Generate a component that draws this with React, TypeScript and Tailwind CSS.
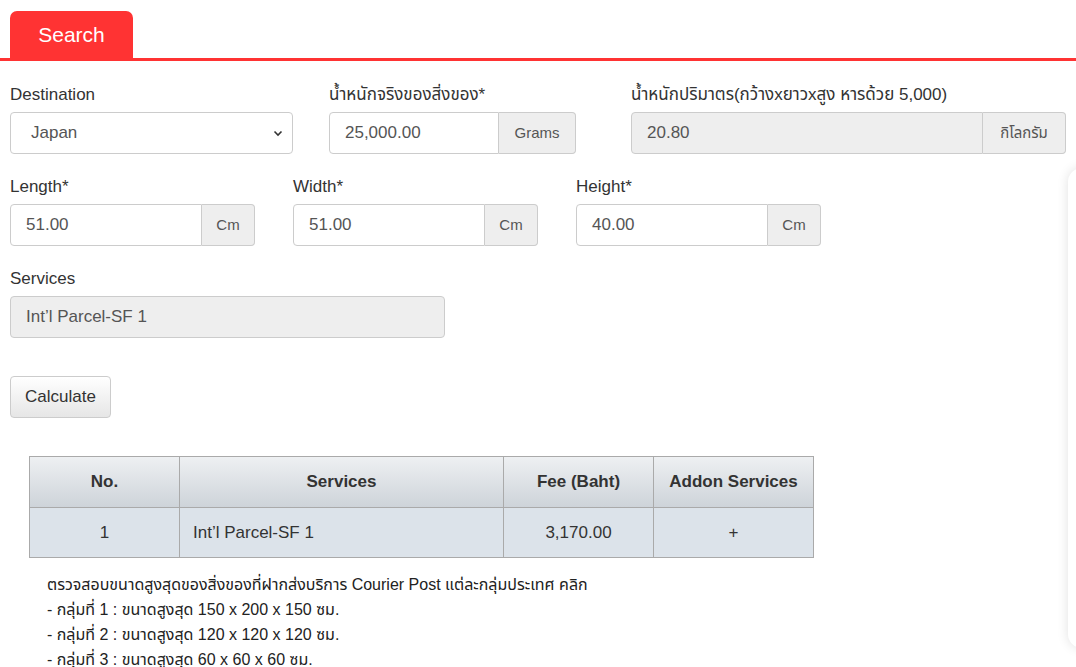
export default function App() {
  const f = { fontFamily: '"Liberation Sans", "Noto Sans", "Noto Sans Thai", sans-serif' };
  const inp = "h-[42px] border border-[#cccccc] flex items-center px-[15px] text-[17px] text-[#555]";
  const addon = "h-[42px] border border-l-0 border-[#cccccc] bg-[#eeeeee] flex items-center justify-center text-[15px] text-[#555] rounded-r-[4px]";
  const Group = ({ w, aw, v, u }: { w: number; aw: number; v: string; u: string }) => (
    <div className="flex" style={{ width: w }}>
      <div className={inp + " flex-1 rounded-l-[4px] bg-white"}>{v}</div>
      <div className={addon} style={{ width: aw }}>{u}</div>
    </div>
  );
  return (
    <div className="relative w-[1076px] h-[667px] overflow-hidden bg-white text-[#333]" style={f}>
      <div className="absolute left-[1068px] top-[168px] w-[40px] h-[480px] rounded-[14px] bg-white shadow-[0_0_12px_rgba(0,0,0,0.12)]" />
      <div className="pt-[11px] pl-[10px] border-b-[3px] border-[#ff3333]">
        <div className="w-[123px] h-[47px] bg-[#ff3333] rounded-t-[7px] text-white text-[21px] flex items-center justify-center">Search</div>
      </div>
      <div className="px-[10px] pt-[21px] text-[17px]">
        <div className="flex">
          <div className="w-[320px]">
            <div className="h-[30px]">Destination</div>
            <div className={inp + " w-[283px] rounded-[4px] bg-white justify-between px-[20px] pr-[8px]"}>
              <span>Japan</span>
              <svg width="12" height="12" viewBox="0 0 12 12"><path d="M2.5 4.5 6 8l3.5-3.5" fill="none" stroke="#333" strokeWidth="1.6" /></svg>
            </div>
          </div>
          <div className="w-[303px]">
            <div className="h-[30px]">น้ำหนักจริงของสิ่งของ*</div>
            <Group w={247} aw={77} v="25,000.00" u="Grams" />
          </div>
          <div>
            <div className="h-[30px]">น้ำหนักปริมาตร(กว้างxยาวxสูง หารด้วย 5,000)</div>
            <div className="flex w-[435px]">
              <div className={inp + " flex-1 rounded-l-[4px] bg-[#eeeeee]"}>20.80</div>
              <div className={addon + " w-[83px]"}>กิโลกรัม</div>
            </div>
          </div>
        </div>
        <div className="flex mt-[20px] gap-[38px]">
          {[["Length*", "51.00"], ["Width*", "51.00"], ["Height*", "40.00"]].map(([l, v]) => (
            <div key={l}>
              <div className="h-[30px]">{l}</div>
              <Group w={245} aw={53} v={v} u="Cm" />
            </div>
          ))}
        </div>
        <div className="mt-[20px]">
          <div className="h-[30px]">Services</div>
          <div className={inp + " w-[435px] rounded-[4px] bg-[#eeeeee]"}>Int’l Parcel-SF 1</div>
        </div>
        <button className="mt-[38px] h-[42px] w-[101px] rounded-[4px] border border-[#cccccc] bg-gradient-to-b from-white to-[#e6e6e6] text-[17px] text-[#333]">Calculate</button>
        <table className="ml-[19px] mt-[38px] border-collapse text-[17px]">
          <thead>
            <tr className="h-[51px] bg-gradient-to-b from-[#eef0f2] to-[#cdd3d9] font-bold">
              <th className="w-[150px] border border-[#aaaaaa]">No.</th>
              <th className="w-[324px] border border-[#aaaaaa]">Services</th>
              <th className="w-[150px] border border-[#aaaaaa]">Fee (Baht)</th>
              <th className="w-[160px] border border-[#aaaaaa]">Addon Services</th>
            </tr>
          </thead>
          <tbody>
            <tr className="h-[50px] bg-[#dce3ea]">
              <td className="border border-[#aaaaaa] text-center">1</td>
              <td className="border border-[#aaaaaa] pl-[13px]">Int’l Parcel-SF 1</td>
              <td className="border border-[#aaaaaa] text-center">3,170.00</td>
              <td className="border border-[#aaaaaa] text-center">+</td>
            </tr>
          </tbody>
        </table>
        <div className="ml-[37px] mt-[14px] text-[16px] leading-[25px] text-[#222]">
          <div>ตรวจสอบขนาดสูงสุดของสิ่งของที่ฝากส่งบริการ Courier Post แต่ละกลุ่มประเทศ คลิก</div>
          <div>- กลุ่มที่ 1 : ขนาดสูงสุด 150 x 200 x 150 ซม.</div>
          <div>- กลุ่มที่ 2 : ขนาดสูงสุด 120 x 120 x 120 ซม.</div>
          <div>- กลุ่มที่ 3 : ขนาดสูงสุด 60 x 60 x 60 ซม.</div>
        </div>
      </div>
    </div>
  );
}
